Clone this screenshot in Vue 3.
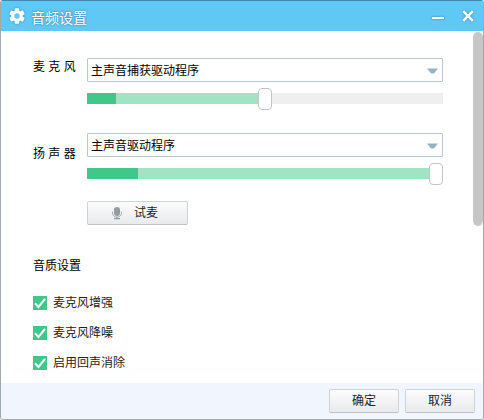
<template>
  <div class="dialog">
    <!-- 标题栏 -->
    <header class="title-bar">
      <svg class="gear" viewBox="0 0 16 16" width="16" height="16">
        <g fill="#fff">
          <rect
            v-for="angle in [0, 60, 120]"
            :key="angle"
            x="5.7"
            y="0.2"
            width="4.6"
            height="15.6"
            rx="0.8"
            :transform="`rotate(${angle} 8 8)`"
          />
          <circle cx="8" cy="8" r="5.8" />
        </g>
        <circle cx="8" cy="8" r="2.7" fill="#60c8f4" />
      </svg>
      <h1 class="title">音频设置</h1>
      <button class="win-btn" type="button" aria-label="最小化">
        <svg viewBox="0 0 12 12" width="12" height="12">
          <path d="M0 8h12" stroke="#fff" stroke-width="2" />
        </svg>
      </button>
      <button class="win-btn" type="button" aria-label="关闭">
        <svg viewBox="0 0 12 12" width="12" height="12">
          <path d="M1.2 1.2l9.6 9.6M10.8 1.2l-9.6 9.6" stroke="#fff" stroke-width="2.5" />
        </svg>
      </button>
    </header>

    <!-- 设置内容 -->
    <main class="content">
      <div v-for="device in devices" :key="device.id" class="device" :class="device.id">
        <label class="device-label" :for="device.id">{{ device.label }}</label>
        <div class="device-field">
          <div class="select-box">
            <select :id="device.id" v-model="device.driver">
              <option v-for="item in device.drivers" :key="item">{{ item }}</option>
            </select>
            <svg class="arrow" viewBox="0 0 11 6" width="11" height="6">
              <path d="M0 0.5h11L7 5.5H4z" fill="#97b3c2" />
            </svg>
          </div>
          <input
            v-model.number="device.volume"
            class="slider"
            type="range"
            min="0"
            max="100"
            :aria-label="device.label"
            :style="{ '--level': device.level + '%', '--volume': device.volume + '%' }"
          />
        </div>
      </div>

      <button class="btn test-btn" type="button">
        <svg viewBox="0 0 12 14" width="12" height="14">
          <rect x="3" y="1" width="6" height="9" rx="3" fill="#929da3" />
          <path d="M1.5 5.5v1.5c0 5.4 9 5.4 9 0V5.5" fill="none" stroke="#a3adb2" />
          <path d="M6 11v2M3 12.6h6" fill="none" stroke="#929da3" stroke-width="1.4" />
        </svg>
        试麦
      </button>

      <h2 class="section-title">音质设置</h2>
      <label v-for="option in options" :key="option.label" class="option">
        <input v-model="option.checked" type="checkbox" />
        <svg class="tick" viewBox="0 0 14 14" width="14" height="14">
          <path d="M2 7.3l3.4 3.6L12 3" fill="none" stroke="#fff" stroke-width="2" />
        </svg>
        {{ option.label }}
      </label>

      <div class="scroll-thumb"></div>
    </main>

    <!-- 底部按钮 -->
    <footer class="footer">
      <button class="btn" type="button">确定</button>
      <button class="btn" type="button">取消</button>
    </footer>
  </div>
</template>

<script setup>
import { ref } from 'vue'

// 音频设备，level为当前音量电平，volume为滑块位置
const devices = ref([
  {
    id: 'mic',
    label: '麦 克 风',
    driver: '主声音捕获驱动程序',
    drivers: ['主声音捕获驱动程序'],
    level: 8.2,
    volume: 50
  },
  {
    id: 'speaker',
    label: '扬 声 器',
    driver: '主声音驱动程序',
    drivers: ['主声音驱动程序'],
    level: 14.3,
    volume: 100
  }
])

// 音质选项
const options = ref([
  { label: '麦克风增强', checked: true },
  { label: '麦克风降噪', checked: true },
  { label: '启用回声消除', checked: true }
])
</script>

<style>
body {
  background: #fff;
}
</style>

<style scoped>
.dialog {
  display: flex;
  flex-direction: column;
  box-sizing: border-box;
  min-height: 100vh;
  border: 1px solid #a0abae;
  border-top-color: #4189aa;
  border-radius: 3px;
  overflow: hidden;
  background: #fff;
  color: #000;
  font: 12px/18px "Liberation Sans", "Noto Sans CJK SC", sans-serif;
}

.dialog button,
.dialog select {
  font: inherit;
}

.title-bar {
  display: flex;
  align-items: center;
  height: 30px;
  padding: 0 9px 0 8px;
  background: #60c8f4;
}

.gear,
.win-btn svg {
  filter: drop-shadow(0 0 1px rgba(20, 90, 130, 0.6));
}

.title {
  flex: 1;
  margin: 0 0 0 6px;
  padding-top: 3px;
  color: #fff;
  font-size: 14px;
  font-weight: 400;
  line-height: 20px;
  text-shadow: 0 0 2px rgba(20, 90, 130, 0.8);
}

.win-btn {
  display: flex;
  padding: 0;
  margin-left: 18px;
  border: 0;
  background: none;
}

.content {
  position: relative;
  flex: 1;
  padding: 27px 40px 0 32px;
}

.device {
  display: flex;
  margin-bottom: 24px;
}

.device-label {
  width: 54px;
}

.speaker {
  margin-bottom: 17px;
}

.speaker .device-label {
  padding-top: 12px;
}

.device-field {
  flex: 1;
}

.select-box {
  position: relative;
  margin-bottom: 6px;
}

.select-box select {
  display: block;
  appearance: none;
  box-sizing: border-box;
  width: 100%;
  height: 24px;
  padding: 2px 20px 0 3px;
  border: 1px solid #b5c8d3;
  border-radius: 1px;
  background: #fff;
  color: #000;
}

.arrow {
  position: absolute;
  top: 10px;
  right: 5px;
  pointer-events: none;
}

.slider {
  display: block;
  appearance: none;
  width: 100%;
  height: 21px;
  margin: 0;
  background: none;
}

.slider::-webkit-slider-runnable-track {
  height: 11px;
  background: linear-gradient(
    to right,
    #40c78a var(--level),
    #a0e4c4 var(--level),
    #a0e4c4 var(--volume),
    #efefef var(--volume)
  );
}

.slider::-webkit-slider-thumb {
  appearance: none;
  box-sizing: border-box;
  width: 14px;
  height: 22px;
  margin-top: -5px;
  border: 1px solid #c4c4c4;
  border-radius: 4px;
  background: #fff;
}

.btn {
  box-sizing: border-box;
  width: 70px;
  height: 24px;
  padding: 0;
  border: 1px solid #d0d3d6;
  border-bottom-color: #bfc2c5;
  border-radius: 2px;
  background: linear-gradient(#fcfcfd, #e9eaec);
  color: #222;
}

.test-btn {
  display: flex;
  align-items: center;
  justify-content: center;
  gap: 11px;
  width: 101px;
  margin-left: 54px;
  padding-right: 6px;
}

.section-title {
  margin: 32px 0 19px;
  font-size: 12px;
  font-weight: 400;
}

.option {
  position: relative;
  display: flex;
  align-items: center;
  gap: 6px;
  width: fit-content;
  margin-bottom: 12px;
  color: #222;
}

.option:last-of-type {
  margin-bottom: 8px;
}

.option input {
  appearance: none;
  width: 14px;
  height: 14px;
  margin: 0;
  border: 1px solid #40c78a;
  box-sizing: border-box;
}

.option input:checked {
  background: #40c78a;
}

.tick {
  position: absolute;
  left: 0;
  display: none;
  pointer-events: none;
}

.option input:checked + .tick {
  display: block;
}

.scroll-thumb {
  position: absolute;
  top: 1px;
  right: 0;
  width: 10px;
  height: 55%;
  border-radius: 5px;
  background: #c6c6c6;
}

.footer {
  display: flex;
  justify-content: flex-end;
  gap: 6px;
  padding: 6px 8px;
  background: #f0f5fe;
}
</style>
